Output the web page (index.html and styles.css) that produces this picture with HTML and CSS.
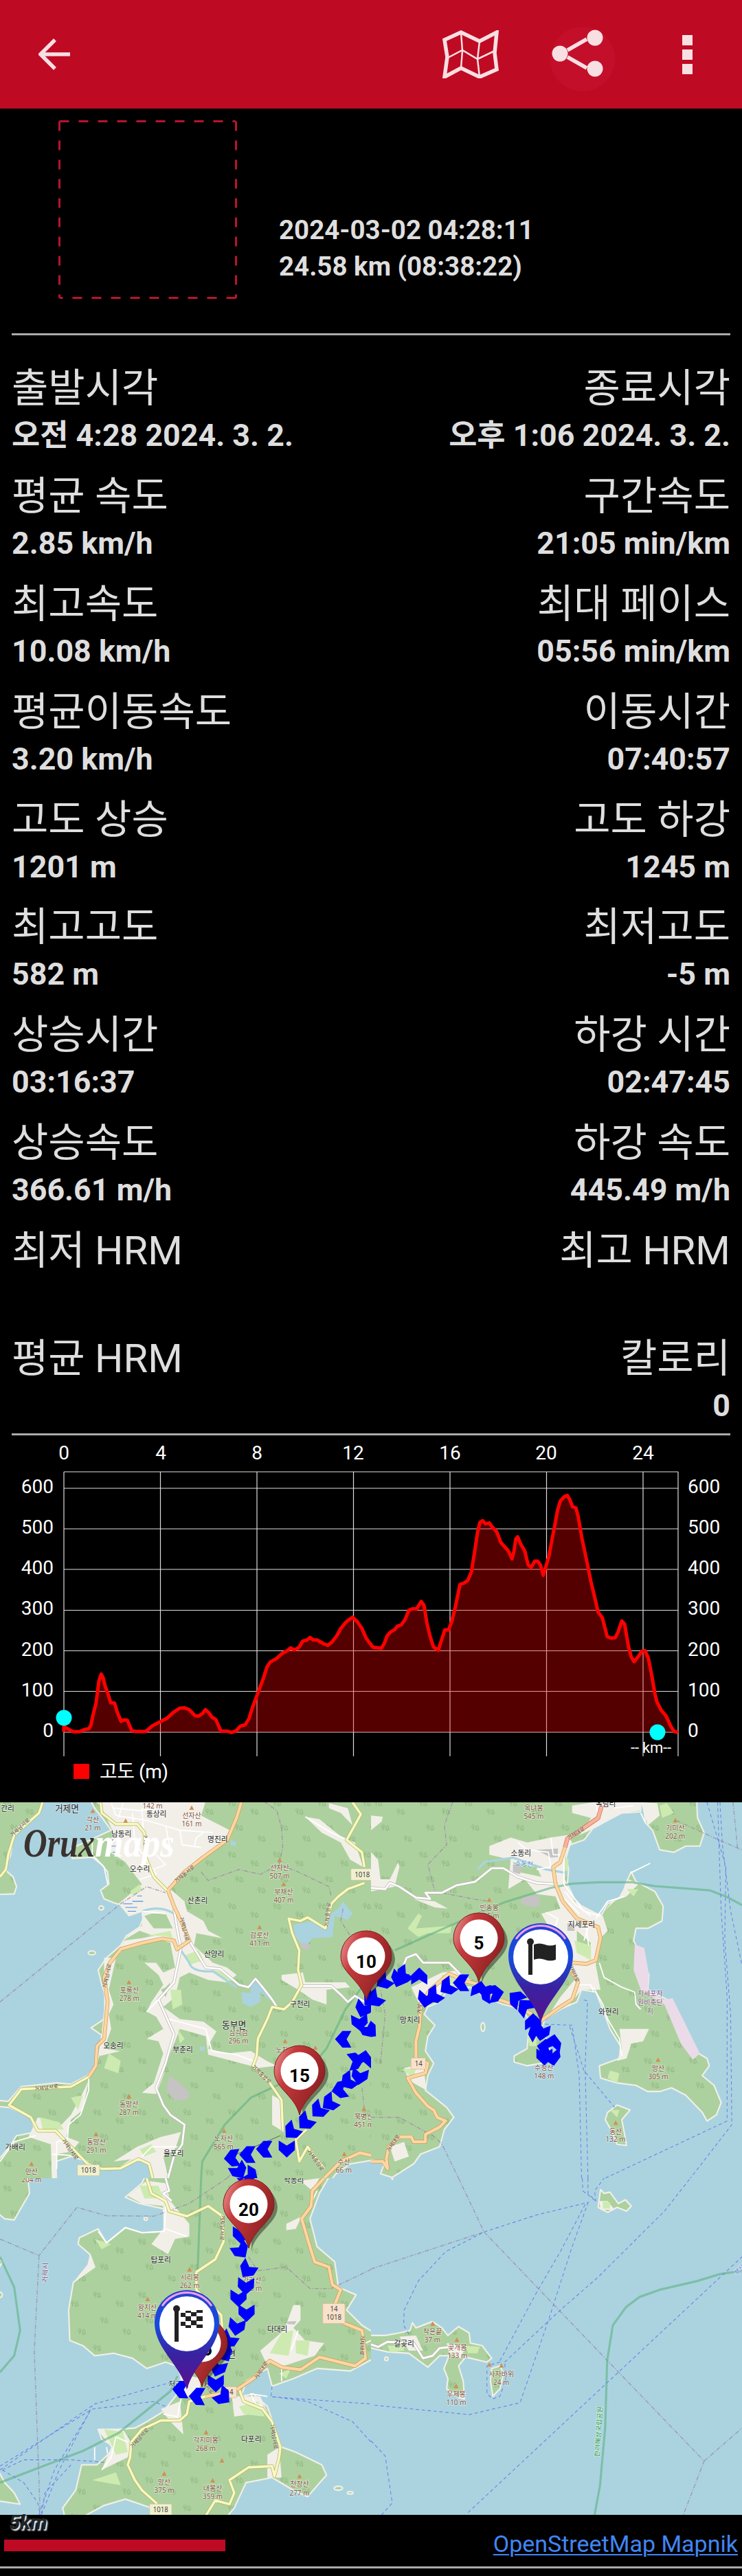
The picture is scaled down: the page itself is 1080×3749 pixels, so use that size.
FILE: index.html
```html
<!DOCTYPE html>
<html lang="ko">
<head>
<meta charset="UTF-8">
<meta name="viewport" content="width=device-width, initial-scale=1.0">
<title>OruxMaps</title>
<link rel="stylesheet" href="styles.css">
</head>
<body>
<header class="toolbar">
  <svg class="icon-back" width="46" height="46" viewBox="0 0 46 46"><path d="M46 23H4M24 2L3 23l21 21"/></svg>
  <div class="actions">
    <svg class="icon-map" width="82" height="70" viewBox="0 0 82 70">
      <path class="thick" d="M3 14L27 3l27 13L79 3l-3 30 3 24-25 11-27-13L3 68l4-29z"/>
      <path class="thin" d="M27 3l2 27-2 25M54 16l-3 26 3 26M6 41l23-12 22 13 25-12"/>
    </svg>
    <svg class="icon-share" width="94" height="94" viewBox="0 0 94 94">
      <circle class="ripple" cx="47" cy="47" r="47"/>
      <path d="M25 34L53 18M25 44l28 16"/>
      <circle cx="14" cy="39" r="11.5"/><circle cx="65" cy="16" r="11.5"/><circle cx="65" cy="61" r="11.5"/>
    </svg>
    <div class="menu"><i></i><i></i><i></i></div>
  </div>
</header>

<section class="summary">
  <svg class="photo" width="260" height="260"><path d="M1.500 1.500H258M258.500 1.500V258.500M1.500 1.500V258.500M258.500 258.500H1.500"/></svg>
  <div class="summary-text">2024-03-02 04:28:11<br>24.58 km (08:38:22)</div>
</section>

<section class="stats">
  <div class="row"><div><p>출발시각</p><b>오전 4:28 2024. 3. 2.</b></div><div><p>종료시각</p><b>오후 1:06 2024. 3. 2.</b></div></div>
  <div class="row"><div><p>평균 속도</p><b>2.85 km/h</b></div><div><p>구간속도</p><b>21:05 min/km</b></div></div>
  <div class="row"><div><p>최고속도</p><b>10.08 km/h</b></div><div><p>최대 페이스</p><b>05:56 min/km</b></div></div>
  <div class="row"><div><p>평균이동속도</p><b>3.20 km/h</b></div><div><p>이동시간</p><b>07:40:57</b></div></div>
  <div class="row"><div><p>고도 상승</p><b>1201 m</b></div><div><p>고도 하강</p><b>1245 m</b></div></div>
  <div class="row"><div><p>최고고도</p><b>582 m</b></div><div><p>최저고도</p><b>-5 m</b></div></div>
  <div class="row"><div><p>상승시간</p><b>03:16:37</b></div><div><p>하강 시간</p><b>02:47:45</b></div></div>
  <div class="row"><div><p>상승속도</p><b>366.61 m/h</b></div><div><p>하강 속도</p><b>445.49 m/h</b></div></div>
  <div class="row"><div><p>최저 HRM</p></div><div><p>최고 HRM</p></div></div>
  <div class="row"><div><p>평균 HRM</p></div><div><p>칼로리</p><b>0</b></div></div>
</section>

<svg class="chart" width="1080" height="534" viewBox="0 2089 1080 534">
  <path class="grid" d="M93 2142H987M93 2166H987M93 2225H987M93 2284H987M93 2343.500H987M93 2402.500H987M93 2461.500H987M93 2521H987"/>
  <path class="grid" d="M93 2142V2556M233.500 2142V2556M374 2142V2556M514.500 2142V2556M655 2142V2556M795.500 2142V2556M936 2142V2556M987 2142V2556"/>
  <!-- altitude profile -->
  <svg x="0" y="1900" width="1080" height="720" viewBox="0 0 1568 1568" preserveAspectRatio="none">
    <path class="profile" d="M135 1352V1335L155 1351 168 1351 178 1344 188 1341 192 1330 197 1295 203 1260 209 1190 214 1168 218 1180 222 1205 228 1230 234 1259 242 1260 248 1290 256 1318 262 1313 269 1314 278 1346 286 1350 308 1350 322 1332 352 1309 366 1290 380 1276 390 1275 400 1281 412 1300 420 1301 428 1293 434 1281 441 1290 448 1305 456 1312 467 1349 480 1349 489 1353 498 1349 508 1333 518 1329 526 1310 534 1272 544 1232 556 1184 564 1146 571 1130 584 1119 596 1103 607 1094 614 1085 622 1092 632 1083 640 1063 648 1061 655 1052 662 1060 670 1060 684 1072 693 1077 702 1066 712 1046 720 1024 732 1002 745 988 755 1002 765 1024 774 1055 788 1083 806 1086 812 1071 818 1047 826 1034 834 1027 840 1016 848 1012 856 995 864 966 872 961 880 962 890 938 896 950 902 1005 908 1044 916 1082 926 1093 932 1065 940 1028 948 1028 955 1000 962 957 972 884 980 880 988 872 996 845 1003 780 1009 720 1014 688 1020 682 1026 692 1034 689 1042 705 1050 718 1058 750 1066 764 1074 777 1082 803 1086 780 1090 740 1094 733 1100 755 1109 778 1116 822 1122 830 1130 810 1136 810 1142 822 1148 855 1153 830 1160 795 1166 745 1172 700 1178 650 1184 620 1192 606 1199 602 1205 618 1210 638 1217 641 1222 670 1230 740 1240 810 1248 870 1256 920 1264 972 1273 990 1283 1049 1291 1054 1300 1053 1306 1035 1314 1000 1320 1010 1328 1080 1334 1114 1340 1129 1348 1114 1356 1096 1363 1094 1370 1117 1377 1170 1384 1230 1388 1255 1397 1282 1408 1302 1418 1335 1425 1350 1433 1353"/>
  </svg>
  <circle class="knob" cx="93" cy="2500" r="11.500"/>
  <circle class="knob" cx="957" cy="2521" r="11.500"/>
  <g class="axis mid">
    <text x="93" y="2124">0</text><text x="234" y="2124">4</text><text x="374" y="2124">8</text><text x="514" y="2124">12</text>
    <text x="655" y="2124">16</text><text x="795" y="2124">20</text><text x="936" y="2124">24</text>
  </g>
  <g class="axis end">
    <text x="78" y="2173">600</text><text x="78" y="2232">500</text><text x="78" y="2291">400</text><text x="78" y="2350">300</text>
    <text x="78" y="2410">200</text><text x="78" y="2469">100</text><text x="78" y="2528">0</text>
  </g>
  <g class="axis">
    <text x="1001" y="2173">600</text><text x="1001" y="2232">500</text><text x="1001" y="2291">400</text><text x="1001" y="2350">300</text>
    <text x="1001" y="2410">200</text><text x="1001" y="2469">100</text><text x="1001" y="2528">0</text>
    <text class="unit" x="918" y="2551" textLength="59">-- km--</text>
    <text x="145" y="2588" textLength="100">고도 (m)</text>
  </g>
  <rect class="legend" x="107" y="2567" width="23" height="22"/>
</svg>

<svg class="map" width="1080" height="1037" viewBox="0 0 1080 1037">
  <defs>
    <g id="tree"><path d="M-9 2a6 7 0 1 1 1 0M-8 -7V12M9 -10l-6 10h3l-5 8h16l-5 -8h3zM9 8v5"/></g>
    <pattern id="trees" width="190" height="210" patternUnits="userSpaceOnUse">
      <rect class="forest" width="190" height="210"/>
      <use href="#tree" x="30" y="40"/><use href="#tree" x="125" y="75"/><use href="#tree" x="60" y="140"/><use href="#tree" x="155" y="185"/>
    </pattern>
    <path id="peak" d="M0 -10L10 8H-10z"/>
    <path id="arrow" d="M0 -34L34 -3V35L0 15 -34 35V-3z"/>
    <linearGradient id="redGrad" x1="0" y1="0" x2="1" y2=".5"><stop offset="0" stop-color="#f0a0a0"/><stop offset=".35" stop-color="#c53a3c"/><stop offset="1" stop-color="#8f2022"/></linearGradient>
    <linearGradient id="blueGrad" x1="0" y1="0" x2="0" y2="1"><stop offset="0" stop-color="#2a3fd0"/><stop offset=".35" stop-color="#164be0"/><stop offset=".65" stop-color="#3a22a0"/><stop offset="1" stop-color="#5a1090"/></linearGradient>
    <g id="redPin">
      <path class="shadow" d="M4 67C10 40 42 28 42 4A37 37 0 0 0 4 -30z"/>
      <path fill="url(#redGrad)" stroke="#7d1c1e" d="M0 64C-7 35 -37 25 -37 0a37 37 0 0 1 74 0C37 25 7 35 0 64z"/>
      <circle r="27.500" fill="#fff"/>
    </g>
    <g id="bluePin">
      <path fill="url(#blueGrad)" d="M0 98C-9 62 -47 38 -47 0a47 47 0 0 1 94 0C47 38 9 62 0 98z"/>
      <path d="M-36 -24A43 43 0 0 1 36 -24" fill="none" stroke="#f0a0f0" stroke-width="3"/>
      <circle cy="2" r="40" fill="#fff"/>
      <circle cx="-15" cy="-20" r="5"/><rect x="-18" y="-18" width="6" height="46"/>
    </g>
    <!-- roads, drawn twice: casing and fill -->
    <path id="wA" d="M735 470L750 560 765 630 735 770 670 840 735 980 700 1100 660 1200 690 1270 720 1310 780 1350 770 1430 735 1480 710 1568M800 600L870 710 930 715 1010 780 1050 790 1080 755 1110 790 1150 840 1170 870M1275 785L1400 785 1440 820 1470 850 1500 825 1540 850"/>
    <path id="oA" d="M1020 36L1000 100 960 190 860 260 780 320 710 395 735 460 770 530 800 600 748 635 735 600 685 592 600 610 510 635 465 690 440 750 455 850 440 1000 410 1030 405 1110 375 1155M1568 1475L1520 1465 1440 1500 1370 1568"/>
    <path id="yA" d="M375 1155L300 1195 200 1200 90 1205 38 1270 130 1320 160 1375 235 1375 290 1430 370 1510 430 1530 510 1528 585 1490 630 1510 645 1568M425 36L430 80 490 125 580 125 610 160 615 260 650 340 705 395M180 36L165 80 60 170 35 250 25 310 0 340M1540 365L1470 390 1430 420 1400 450 1375 550 1300 505 1270 520 1220 510 1235 570 1265 640 1260 720 1275 780 1235 850 1200 880 1150 870 1130 920 1090 1000 1085 1070 1070 1110 1140 1180 1190 1250 1195 1370M1295 1370L1250 1410 1265 1500 1300 1440 1370 1530M1490 36L1525 85 1465 190 1530 240 1540 300"/>
    <path id="wB" d="M0 385L60 390 80 365 120 380 190 425 250 430 230 405 300 405 360 375 440 360 510 305 560 305 620 340 700 365 790 370M130 720L150 670 190 655 220 690 330 690 380 740 420 765"/>
    <path id="sB" d="M975 50L960 100 900 140 830 185 820 220"/>
    <path id="oB" d="M820 220L800 280 770 300 780 370 810 440 870 510 960 545 970 590 950 680 910 695 850 690M845 720L875 770 850 840 800 870 735 915 700 940 680 900 600 860 540 840 460 780 400 765 330 735 250 800 210 860 205 950 190 1010 190 1080 240 1100 230 1140 155 1160 190 1220 240 1275 265 1290 280 1320 315 1335 290 1360 230 1390 230 1420 180 1420 170 1400 120 1400 75 1440 65 1490 70 1530 50 1500 0 1500"/>
    <path id="wC" d="M700 0L715 50 690 60 725 90"/>
    <path id="yC" d="M620 0L640 60 700 90 715 130 790 150 880 110 940 150 945 250 910 320 830 370 830 440 935 540 940 600M870 860L800 880 790 930 760 955 680 955 600 990 555 1040 550 1100 540 1130 570 1190 600 1230 660 1280 690 1340M870 1330L910 1270 970 1285 990 1240 970 1190 1050 1140 1150 1135 1160 1175 1180 1100 1185 1060 1150 960 1110 910 1030 880 1010 830 1030 810"/>
    <path id="oC" d="M1370 0L1320 50 1315 110 1275 160 1300 240 1330 330 1390 350 1405 420 1440 440 1410 510 1450 570 1530 600 1545 710 1500 740 1350 705 1270 755 1190 745 1140 720 1070 790 990 840 870 860"/>
    <path id="wD" d="M0 655L30 665 70 645 180 650 220 710 260 700 290 670 340 665"/>
  </defs>
  <rect class="sea" width="1080" height="1037"/>

  <!-- north west -->
  <svg x="0" y="-13" width="540" height="560" viewBox="0 0 1568 1568" preserveAspectRatio="none">
    <g class="land" fill="url(#trees)">
      <path d="M365 0L400 60 440 110 470 150 380 190 300 225 305 265 390 260 430 290 455 320 460 370 425 395 440 430 480 445 510 455 545 498 600 480 605 510 590 545 535 580 510 620 450 670 415 720 430 780 455 850 440 920 385 955 430 985 425 1030 410 1100 370 1150 300 1185 240 1180 90 1195 35 1255 -20 1250V1275L40 1280 130 1320 150 1380 70 1395 40 1440 -20 1510V1600H240L235 1500 300 1480 370 1500 360 1530 500 1530 560 1490 640 1500 650 1600H1380L1420 1550 1480 1510 1600 1490V0z"/>
      <path d="M-20 0H190L165 80 60 150 45 250 20 310 55 340 70 380 60 410 -20 412z"/>
      <ellipse cx="428" cy="467" rx="10" ry="8"/><ellipse cx="388" cy="650" rx="15" ry="8"/>
    </g>
    <g class="cream">
      <path d="M375 0H880L850 90 970 150 930 220 800 310 720 390 780 440 790 480 860 520 880 560 940 590 830 570 820 620 900 690 960 710 1000 740 960 770 880 760 800 730 760 750 740 830 690 870 760 920 860 930 915 970 890 1010 880 1040 960 1060 1060 1050 1160 1110 1060 1110 880 1065 870 990 760 960 740 1010 710 1080 690 1150 660 1225 600 1220 650 1180 690 1060 670 1010 620 1000 690 960 660 910 620 890 640 850 690 780 670 740 610 690 660 690 690 730 740 710 720 610 660 590 560 620 500 640 540 580 600 540 600 480 545 498 500 450 600 370 560 320 530 280 450 230 480 160 430 60z"/>
      <path d="M480 1500L580 1440 680 1400 765 1380 740 1450 690 1480 720 1600H650L630 1500 560 1490zM375 1170L350 1290 300 1330 280 1400 335 1420 300 1460 240 1470V1600H220L215 1430 120 1400 160 1320 260 1350 300 1310 350 1220z"/>
      <path d="M1190 740L1280 730 1290 770 1460 770 1480 790 1380 800 1380 860 1320 840 1260 800 1190 760zM1290 95L1350 105 1440 175 1500 200 1535 300 1480 270 1440 200 1360 160zM1390 40L1470 60 1490 130 1440 80 1390 60zM1060 1060L1170 1110 1080 1120zM1150 1230L1190 1250 1200 1380 1150 1350zM440 670L490 670 460 800 480 860 460 900 470 960 440 1040 510 1050 420 1070 440 880z"/>
    </g>
    <!-- woods between the fields -->
    <path class="forest" d="M390 190L440 210 400 240 340 230zM700 490L730 550 650 550 610 500 640 490zM780 900L870 900 870 920 800 920zM520 600L590 560 650 580 600 590zM300 1340L340 1390 310 1390zM680 800L700 790 720 770 700 830z"/>
    <g class="scrub"><path d="M460 1060L510 1090 500 1140 440 1120zM720 800L765 800 770 860 730 880zM170 1320L250 1340 270 1370 180 1370zM590 1450L640 1430 660 1460 610 1480zM750 960L780 1000 760 1020zM300 1240L350 1230 330 1290zM550 400L590 370 600 390 565 420zM900 720L960 730 1000 770 930 750zM620 580L720 560 730 590 690 580zM780 660L840 640 860 680 800 700z"/></g>
    <path class="water" d="M1240 535L1320 520 1370 550 1400 490 1430 470 1450 440 1490 490 1470 515 1415 500 1405 585 1320 590 1300 615 1270 610 1245 580zM1020 810L1060 815 1060 775 1090 765 1150 850 1100 810 1100 850 1060 870 1025 855zM975 190L1000 200 995 215 975 210zM845 1030L868 1035 860 1052 845 1048z"/>
    <path class="river" d="M600 480Q680 455 735 490Q750 560 765 640L800 690Q810 730 900 725L1000 790"/>
    <path class="quarry" d="M715 1150L760 1180 800 1220 795 1245 740 1252 705 1215zM1270 610L1312 615 1300 640 1270 630z"/>
    <path class="marsh" d="M470 190h20M465 215h25M475 240h20M520 450h40M530 465h50M560 440h45M540 480h35M580 418h20"/>
    <path class="border" d="M0 850L510 450 620 380 700 405M850 320L880 355 1010 310 1100 330 1180 290 1260 320 1390 380 1400 420M1180 290L1195 220 1190 140 1170 70 1120 36M1450 470L1440 520 1480 580M960 1568L1000 1530M1530 1200L1540 1290"/>
    <path class="park" d="M850 1568L855 1500 950 1350 1060 1240 1160 1195 1300 1130 1380 1040 1460 880 1568 740"/>
    <use href="#wA" class="case white"/><use href="#wA" class="white"/>
    <path class="lane" d="M715 920L870 960 895 1050 1000 1065 1070 1090M375 1160V1210L340 1310 290 1350 285 1410 240 1420V1530M0 1500L60 1420 150 1395M470 40L490 90 620 110 760 150 900 160M520 40L500 100M600 60L610 220M700 130L720 230M760 150L770 210 850 220M560 80L570 200 660 330 590 350M480 60L590 70 680 60M660 250L700 290 650 310M820 220L830 180 860 160M600 480L700 490M670 840L620 890M390 200L390 250 440 300 455 370M600 1480L640 1440 750 1440M1290 95L1400 160 1470 190 1520 230M220 1470L300 1475"/>
    <use href="#oA" class="case orange"/><use href="#oA" class="orange"/>
    <use href="#yA" class="case yellow"/><use href="#yA" class="yellow"/>
    <g class="peaks">
      <use href="#peak" x="392" y="72"/><use href="#peak" x="531" y="112"/><use href="#peak" x="810" y="59"/><use href="#peak" x="1182" y="272"/><use href="#peak" x="1199" y="370"/><use href="#peak" x="1097" y="546"/><use href="#peak" x="545" y="770"/><use href="#peak" x="545" y="1235"/><use href="#peak" x="406" y="1389"/><use href="#peak" x="133" y="1510"/><use href="#peak" x="947" y="1375"/><use href="#peak" x="1205" y="1010"/><use href="#peak" x="1333" y="1037"/><use href="#peak" x="1538" y="1286"/><use href="#peak" x="1455" y="1470"/>
      <text x="392" y="117">각산<tspan x="392" dy="33">21 m</tspan></text>
      <text x="645" y="63">142 m</text>
      <text x="810" y="101">선자산<tspan x="810" dy="34">161 m</tspan></text>
      <text x="1182" y="315">선자산<tspan x="1182" dy="33">507 m</tspan></text>
      <text x="1199" y="413">부채산<tspan x="1199" dy="33">407 m</tspan></text>
      <text x="1097" y="588">감로산<tspan x="1097" dy="33">411 m</tspan></text>
      <text x="547" y="813">포록산<tspan x="547" dy="33">278 m</tspan></text>
      <text x="1008" y="986">삼각점<tspan x="1008" dy="33">296 m</tspan></text>
      <text x="545" y="1277">동망산<tspan x="545" dy="33">287 m</tspan></text>
      <text x="407" y="1432">동망산<tspan x="407" dy="33">291 m</tspan></text>
      <text x="133" y="1551">안산</text>
      <text x="945" y="1418">노자산<tspan x="945" dy="33">565 m</tspan></text>
      <text x="1205" y="1055">노자산</text>
      <text x="1538" y="1328">북병산<tspan x="1538" dy="33">451 m</tspan></text>
      <text x="1453" y="1513">수산<tspan x="1453" dy="33">66 m</tspan></text>
    </g>
    <g class="places">
      <text x="32" y="73">간리</text><text class="big" x="283" y="75">거제면</text><text x="661" y="95">동상리</text><text x="513" y="176">남동리</text><text x="920" y="199">명진리</text><text x="591" y="320">오수리</text><text x="835" y="448">산촌리</text><text x="905" y="667">산양리</text><text x="1268" y="872">구천리</text><text class="big" x="989" y="957">동부면</text><text x="773" y="1055">부춘리</text><text x="479" y="1040">오송리</text><text x="64" y="1454">가배리</text><text x="734" y="1478">율포리</text>
    </g>
    <g class="streets">
      <text transform="translate(90 145) rotate(-42)">거제남서로</text><text transform="translate(785 335) rotate(-38)">거제동서로</text><text transform="translate(772 555) rotate(75)">거제남서로</text><text transform="translate(460 745) rotate(-78)">거제남서로</text><text transform="translate(197 1207) rotate(-8)">거제남서로</text><text transform="translate(290 1455) rotate(54)">거제남서로</text><text transform="translate(1100 1150) rotate(43)">거제중앙로</text><text transform="translate(1393 495) rotate(-84)">거제중앙로</text><text transform="translate(1328 1500) rotate(54)">거제중앙로</text><text transform="translate(607 190) rotate(86)">거제</text>
    </g>
    <g class="shield"><rect x="327" y="1513" width="94" height="45" rx="5"/><text x="374" y="1546">1018</text><rect x="1483" y="307" width="94" height="47" rx="5"/><text x="1531" y="342">1018</text></g>
    <path class="cable" d="M1000 1470L1075 1440 1148 1410 1184 1395"/>
    <g class="route">
      <use href="#arrow" transform="translate(1565 840) rotate(225)"/><use href="#arrow" transform="translate(1535 880) rotate(200)"/><use href="#arrow" transform="translate(1520 935) rotate(175)"/><use href="#arrow" transform="translate(1560 965) rotate(150)"/><use href="#arrow" transform="translate(1450 1002) rotate(270)"/><use href="#arrow" transform="translate(1540 1080) rotate(10)"/><use href="#arrow" transform="translate(1505 1090) rotate(80)"/><use href="#arrow" transform="translate(1520 1155) rotate(190)"/><use href="#arrow" transform="translate(1470 1175) rotate(235)"/><use href="#arrow" transform="translate(1435 1208) rotate(260)"/><use href="#arrow" transform="translate(1392 1262) rotate(235)"/><use href="#arrow" transform="translate(1345 1292) rotate(225)"/><use href="#arrow" transform="translate(1290 1340) rotate(225)"/><use href="#arrow" transform="translate(1232 1378) rotate(225)"/><use href="#arrow" transform="translate(1212 1450) rotate(180)"/><use href="#arrow" transform="translate(1116 1450) rotate(270)"/><use href="#arrow" transform="translate(1045 1472) rotate(270)"/><use href="#arrow" transform="translate(980 1486) rotate(265)"/><use href="#arrow" transform="translate(1010 1540) rotate(150)"/><use href="#arrow" transform="translate(1060 1560) rotate(120)"/>
    </g>
  </svg>

  <!-- north east -->
  <svg x="540" y="-13" width="540" height="560" viewBox="0 0 1568 1568" preserveAspectRatio="none">
    <g class="land" fill="url(#trees)">
      <path d="M-20 0H1140V75L1060 80 940 140 900 190 840 210 825 260 835 310 830 370 860 430 910 480 975 495 1000 450 1060 420 1080 360 1100 320 1120 360 1200 400 1235 460 1230 520 1170 550 1120 550 1110 600 1130 640 1175 740 1170 800 1270 850 1330 960 1385 1060 1420 1080 1430 1110 1400 1150 1450 1190 1480 1260 1460 1310 1420 1335 1400 1300 1330 1230 1270 1200 1220 1215 1170 1215 1120 1190 1040 1180 970 1160 965 1110 1050 1080 1055 1030 1010 960 980 880 950 810 890 800 870 850 800 880 735 920 720 960 740 1000 760 1060 720 1100 660 1110 605 1095 605 1070 660 1040 665 980 690 960 640 880 560 860 480 830 420 790 330 790 290 850 240 870 225 900 270 945 240 990 230 1050 265 1100 240 1150 230 1210 320 1280 350 1320 310 1370 290 1440 210 1470 180 1510 90 1565 40 1550 60 1500 -20 1490z"/>
      <path d="M1145 0L1160 120 1190 150 1220 230 1280 240 1330 215 1390 215 1408 160 1380 100 1375 0z"/>
      <path d="M1040 1270L1095 1290 1060 1330 1070 1380 1080 1435 1040 1430 1020 1380 990 1330 1000 1300z"/>
      <ellipse cx="473" cy="952" rx="8" ry="18"/>
    </g>
    <g class="cream">
      <path d="M500 215L590 180 660 200 760 180 830 170 850 200 820 260 820 350 860 440 980 500 1000 560 960 600 950 700 970 800 890 800 840 860 740 920 800 830 860 760 850 700 840 600 760 560 720 490 800 470 780 420 700 410 650 350 580 390 590 270 500 250zM850 50L940 36 1140 0V70L1060 80 950 140 880 170 930 100 850 80zM1140 36L1210 40 1220 90 1170 130zM985 480L1050 420 1090 350 1130 370 1080 420 1020 440zM1050 960L1175 960 1150 1010 1100 1020 1080 1080 1040 1090 1060 1040z"/>
      <path d="M170 790L300 730 370 720 380 770 330 790 240 870 200 850zM140 1120L220 1100 235 1210 160 1170zM0 90L50 95 45 115 0 150zM0 240L30 270 40 350 80 350 115 280 120 300 100 380 0 400zM180 430L270 440 325 470 270 465zM80 1440L140 1420 160 1480 100 1500z"/>
    </g>
    <path class="forest" d="M600 280L700 300 720 340 620 320zM870 560L930 610 920 640 870 610z"/>
    <g class="scrub"><path d="M200 490L215 500 190 550 340 540 335 570 240 570 200 585 155 550zM1220 50L1250 40 1280 80 1230 100zM860 600L930 620 930 680 870 650zM1010 1130L1050 1140 1040 1180 1000 1160zM1010 1290L1050 1290 1040 1320zM130 1125L190 1120 180 1160zM300 740L360 740 350 780 290 780zM820 260L835 270 830 320 820 310zM660 990L700 990 700 1030 670 1030zM1080 390L1130 390 1110 420z"/></g>
    <path class="quarry" d="M640 420L710 415 712 460 680 463 635 450zM700 230L790 225 790 260 760 262zM600 290L640 290 630 330 600 320zM830 530L860 530 860 560 830 560z"/>
    <path class="pink" d="M1115 615L1155 630 1175 740 1170 800 1235 840 1275 835 1390 1060 1360 1085 1310 1020 1240 860 1140 800 1110 720z"/>
    <path class="river" d="M830 325L740 310 600 262 480 280 450 310"/>
    <path class="border" d="M345 36L310 130 320 210 240 290 270 400 430 430 500 440M1290 110L1470 190 1568 230M1530 36L1550 230M0 1320L120 1320 270 1400 300 1430 370 1568M40 1100L60 900 40 800"/>
    <path class="park" d="M100 640L320 545 560 445 760 385 850 368 960 362 1100 362 1200 378 1430 395 1500 420 1568 455"/>
    <path class="ferry" d="M890 1568L880 1150 850 945 720 940M917 1568L905 1120 915 845 890 840M1465 36L1480 480 1505 830 1505 1335 990 1568M1420 36L1500 300 1495 600 1520 900 1525 1350 1350 1568M1475 36L1485 210 1520 480 1568 700M840 950L900 1130 1030 1280"/>
    <use href="#wB" class="case white"/><use href="#wB" class="white"/>
    <path class="lane" d="M965 690L985 750 1060 790 1115 810 1120 860 1140 880M940 790L980 860 1000 920 1050 1000 1060 1070M815 250V370L900 480 970 500M620 200L660 230 750 240 760 300 700 310M760 180L770 250 820 250M820 400L860 450 930 500M820 430L880 490M800 440L840 480 920 540 900 600M910 550L920 620M950 510L1000 440 1070 420M1095 325L1180 285M740 485L790 510 780 540M1140 80L1160 120M870 780L930 780 940 810M950 40L960 90M1030 60L1110 50"/>
    <use href="#sB" class="case salmon"/><use href="#sB" class="salmon"/>
    <use href="#oB" class="case orange"/><use href="#oB" class="orange"/>
    <g class="peaks">
      <use href="#peak" x="500" y="434"/><use href="#peak" x="1286" y="110"/><use href="#peak" x="1213" y="1086"/><use href="#peak" x="1034" y="1343"/>
      <text x="688" y="71">옥녀봉<tspan x="688" dy="33">545 m</tspan></text>
      <text x="500" y="477">빈송봉<tspan x="500" dy="33">395 m</tspan></text>
      <text x="1286" y="152">기미산<tspan x="1286" dy="33">202 m</tspan></text>
      <text x="731" y="1129">수정산<tspan x="731" dy="33">148 m</tspan></text>
      <text x="1214" y="1131">망산<tspan x="1214" dy="33">305 m</tspan></text>
      <text x="1034" y="1388">동산<tspan x="1034" dy="33">132 m</tspan></text>
      <text class="zone" x="1180" y="825">지세포자<tspan x="1180" dy="37">원비축단</tspan><tspan x="1180" dy="37">지</tspan></text>
    </g>
    <g class="places"><text x="992" y="53">옥림리</text><text x="634" y="256">소동리</text><text x="890" y="545">지세포리</text><text x="165" y="935">망치리</text><text x="1004" y="902">와현리</text><text class="stream" transform="translate(645 297) rotate(6)">소동천</text></g>
    <g class="streets"><text transform="translate(870 170) rotate(-30)">거제대로</text><text transform="translate(850 735) rotate(65)">거제대로</text><text transform="translate(213 880) rotate(-85)">거제</text><text transform="translate(100 1430) rotate(-55)">거제대로</text></g>
    <g class="shield trunk"><rect x="169" y="1078" width="62" height="46" rx="5"/><text x="201" y="1112">14</text></g>
    <g class="route">
      <use href="#arrow" transform="translate(733 1075) rotate(180)"/><use href="#arrow" transform="translate(767 1077) rotate(170)"/><use href="#arrow" transform="translate(735 1035) rotate(280)"/><use href="#arrow" transform="translate(770 1015) rotate(10)"/><use href="#arrow" transform="translate(720 975) rotate(190)"/><use href="#arrow" transform="translate(695 968) rotate(330)"/><use href="#arrow" transform="translate(685 930) rotate(0)"/><use href="#arrow" transform="translate(650 868) rotate(320)"/><use href="#arrow" transform="translate(612 835) rotate(310)"/><use href="#arrow" transform="translate(528 815) rotate(80)"/><use href="#arrow" transform="translate(490 812) rotate(300)"/><use href="#arrow" transform="translate(460 798) rotate(10)"/><use href="#arrow" transform="translate(380 772) rotate(270)"/><use href="#arrow" transform="translate(322 790) rotate(235)"/><use href="#arrow" transform="translate(265 825) rotate(235)"/><use href="#arrow" transform="translate(232 840) rotate(190)"/><use href="#arrow" transform="translate(204 744) rotate(0)"/><use href="#arrow" transform="translate(135 742) rotate(235)"/><use href="#arrow" transform="translate(118 758) rotate(200)"/><use href="#arrow" transform="translate(52 766) rotate(235)"/><use href="#arrow" transform="translate(15 840) rotate(230)"/><use href="#arrow" transform="translate(-5 968) rotate(130)"/>
    </g>
  </svg>

  <!-- south west -->
  <svg x="0" y="547" width="540" height="579" viewBox="0 0 1568 1568" preserveAspectRatio="none">
    <g class="land" fill="url(#trees)">
      <path d="M-20 -20H115L125 60 60 165 20 160 -20 130z"/>
      <path d="M620 -20L600 20 530 75 590 100 690 120 700 180 690 210 600 215 530 195 450 255 415 200 335 235 330 260 380 300 400 350 310 410 290 520 295 640 350 660 400 700 480 690 560 710 620 750 700 725 745 740 770 790 750 850 690 920 620 960 570 985 500 990 415 990 430 1030 490 1060 410 1130 345 1130 320 1230 265 1300 290 1400 340 1340 440 1290 530 1265 640 1300 660 1400 900 1400 990 1300 1040 1200 1150 1180 1240 1230 1300 1255 1380 1170 1360 1130 1250 1080 1190 1060 1160 980 1130 900 1070 850 1020 860 1040 800 1130 750 1150 820 1240 790 1340 750 1480 760 1600 700V620L1530 580 1465 520 1505 460 1430 430 1415 330 1340 270 1310 160 1350 60 1400 -20z"/>
      <path d="M-20 1130L20 1200 60 1240 85 1285 -20 1270zM-20 310L10 330 -20 380z"/>
      <ellipse cx="1430" cy="1222" rx="18" ry="8"/><ellipse cx="1480" cy="1240" rx="12" ry="5"/><ellipse cx="616" cy="160" rx="7" ry="6"/><ellipse cx="0" cy="460" rx="10" ry="10"/>
    </g>
    <g class="cream">
      <path d="M620 10L700 20 720 90 800 180 800 230 740 240 710 300 640 260 690 200 690 110 600 100 540 70zM1240 500L1270 500 1270 560 1240 590 1290 640 1370 650 1330 700 1200 740 1120 720 1100 680 1200 600zM410 990L520 990 560 1050 540 1100 430 1150 470 1060zM680 910L760 880 775 1010 720 960zM980 860L1100 860 1130 920 1060 930 990 940zM1275 150L1250 200 1210 205 1210 180zM1130 1090L1180 1060 1190 1180 1130 1180zM380 300L400 350 310 410 370 340zM1270 10L1350 0 1320 50zM760 770L850 790 840 860 770 860z"/>
    </g>
    <g class="scrub"><path d="M390 1190L490 1160 510 1210 440 1200zM590 30L670 30 690 80 610 80zM1190 610L1240 600 1220 700 1140 690zM1250 640L1310 640 1300 700 1250 690zM440 990L520 1000 540 1080 490 1090zM400 240L470 260 430 280zM1010 900L1090 880 1120 940 1030 930zM1180 770L1230 750 1210 790z"/></g>
    <path class="quarry" d="M1213 565L1253 563 1245 577 1215 575z"/><path class="pink" d="M1095 905L1115 890 1130 920z"/>
    <path class="border" d="M0 240L165 305 325 115 450 148 650 150 800 100 960 0M165 305L145 680 170 1327M1050 310L1090 365 1210 350 1310 435 1400 435 1568 360"/>
    <path class="park" d="M0 310L60 430 85 600 60 700 0 765M0 1200L350 1075 500 1005 720 840 750 780M850 0L835 370"/>
    <path class="ferry" d="M0 1150L400 890 740 800M0 1135L390 910 650 880 700 900M10 1150L100 1110 300 1110 440 1120M175 1327L250 1150 390 900M165 1327L230 1150 380 920M10 1150L100 1200 160 1280 170 1327M300 1130L190 1240 175 1327M1150 820L1145 860 1300 880 1490 960 1568 1040M1150 862L1568 890"/>
    <path class="lane" d="M700 110L695 210 600 215 530 195 450 255 415 210M765 870L750 940 690 930M490 1020L470 1100 430 1150M490 1020L540 1040M700 200L790 230M1130 860L1060 850 1080 890 1110 900M1190 750L1190 800M400 1060V1110M1230 680L1260 600M1340 50L1310 110M1545 650L1568 640M450 1060L455 1085"/>
    <use href="#wC" class="case white"/><use href="#wC" class="white"/>
    <use href="#yC" class="case yellow"/><use href="#yC" class="yellow"/>
    <use href="#oC" class="case orange"/><use href="#oC" class="orange"/>
    <g class="peaks">
      <use href="#peak" x="801" y="360"/><use href="#peak" x="624" y="477"/><use href="#peak" x="871" y="1002"/><use href="#peak" x="938" y="1113"/><use href="#peak" x="694" y="1165"/><use href="#peak" x="899" y="1192"/><use href="#peak" x="1266" y="1175"/>
      <text x="133" y="15">204 m</text>
      <text x="802" y="401">시리봉<tspan x="802" dy="33">262 m</tspan></text>
      <text x="623" y="519">왕지산<tspan x="623" dy="33">414 m</tspan></text>
      <text x="1065" y="411">가라산<tspan x="1065" dy="33">580 m</tspan></text>
      <text x="870" y="1042">각지미봉<tspan x="870" dy="33">268 m</tspan></text>
      <text x="694" y="1207">망산<tspan x="694" dy="33">375 m</tspan></text>
      <text x="899" y="1233">내봉산<tspan x="899" dy="33">359 m</tspan></text>
      <text x="1266" y="1217">천장산<tspan x="1266" dy="33">277 m</tspan></text>
      <text class="zone" transform="translate(201 373) rotate(-88)">거제시</text>
    </g>
    <g class="places"><text x="1242" y="20">학동리</text><text x="680" y="332">탑포리</text><text x="1172" y="606">다대리</text><text x="1062" y="1040">다포리</text><text x="755" y="823">저구리</text><text class="big" x="945" y="708">남부면</text></g>
    <g class="streets"><text transform="translate(932 195) rotate(92)">거제남서로</text><text transform="translate(595 1030) rotate(-46)">거제남서로</text><text transform="translate(1110 762) rotate(-55)">거제대로</text><text transform="translate(1522 658) rotate(92)">거제대로</text><text transform="translate(1150 1020) rotate(80)">거제남서로</text><text transform="translate(873 830) rotate(50)">남서로</text></g>
    <g class="shield"><rect x="632" y="1284" width="94" height="45" rx="5"/><text x="679" y="1316">1018</text></g>
    <g class="shield trunk"><rect x="1364" y="494" width="94" height="79" rx="5"/><text x="1411" y="526">14<tspan x="1411" dy="32">1018</tspan></text><rect x="938" y="822" width="62" height="44" rx="5"/><text x="970" y="853">14</text></g>
    <g class="route">
      <use href="#arrow" transform="translate(1060 -20) rotate(90)"/><use href="#arrow" transform="translate(1015 -20) rotate(180)"/><use href="#arrow" transform="translate(1018 225) rotate(180)"/><use href="#arrow" transform="translate(1018 285) rotate(145)"/><use href="#arrow" transform="translate(1045 362) rotate(215)"/><use href="#arrow" transform="translate(1039 427) rotate(183)"/><use href="#arrow" transform="translate(1008 474) rotate(180)"/><use href="#arrow" transform="translate(1042 533) rotate(180)"/><use href="#arrow" transform="translate(1000 588) rotate(190)"/><use href="#arrow" transform="translate(965 640) rotate(215)"/><use href="#arrow" transform="translate(950 692) rotate(150)"/><use href="#arrow" transform="translate(920 750) rotate(200)"/><use href="#arrow" transform="translate(912 810) rotate(180)"/><use href="#arrow" transform="translate(943 862) rotate(130)"/><use href="#arrow" transform="translate(832 860) rotate(272)"/><use href="#arrow" transform="translate(762 833) rotate(272)"/>
    </g>
  </svg>

  <!-- south east -->
  <svg x="540" y="547" width="540" height="579" viewBox="0 0 1568 1568" preserveAspectRatio="none">
    <g class="land" fill="url(#trees)">
      <path d="M-20 620L60 620 120 610 165 600 175 570 190 590 260 565 300 590 325 620 370 585 415 610 420 650 470 660 510 710 490 725 400 705 370 740 390 800 395 870 370 865 320 830 325 790 308 750 330 700 290 700 240 745 160 690 70 685 -20 665z"/>
      <path d="M545 740L560 770 545 830 515 860 505 800 510 750zM970 45L985 60 1010 55 1045 100 1075 85 1100 110 1080 130 1040 115 1000 135 960 115zM75 -20L105 -20 90 5z"/>
      <circle cx="65" cy="712" r="7"/>
    </g>
    <g class="cream"><path d="M120 625L190 620 220 680 160 680zM320 650L400 660 380 710 330 690zM380 840L400 845 395 875 370 865zM965 90L1000 90 1030 125 970 125z"/></g>
    <g class="scrub"><path d="M70 660L140 660 140 680 80 685zM400 660L460 665 450 690 410 690zM980 90L1010 95 1010 120 980 120z"/></g>
    <path class="border" d="M370 0L478 212 995 715 1408 1115 1320 1327M0 358L478 212M1408 1115L1568 985"/>
    <path class="park" d="M945 1327L968 1210 990 980 998 720 1022 580 1078 508 1135 468 1220 440 1380 405 1475 378 1568 365"/>
    <path class="ferry" d="M160 615L138 580 140 520 200 405 315 290 478 212 700 145 920 95M545 720L700 450 800 290 910 95M15 895L415 932 630 885 750 560 850 270 920 90M565 725L800 520 960 390 1240 130 1350 0M410 1318L1568 310M545 725L490 740V850L515 870 545 860 570 790 565 725M0 1035L60 1095 90 1280 45 1327M893 0L895 50 950 90M917 0V60L950 90 945 50 985 0"/>
    <use href="#wD" class="case white"/><use href="#wD" class="white"/>
    <g class="peaks">
      <use href="#peak" x="261" y="574"/><use href="#peak" x="363" y="637"/><use href="#peak" x="360" y="820"/><use href="#peak" x="500" y="735"/><use href="#peak" x="551" y="739"/>
      <text x="260" y="615">작은끝<tspan x="260" dy="33">37 m</tspan></text>
      <text x="365" y="677">곶개봉<tspan x="365" dy="33">133 m</tspan></text>
      <text x="360" y="860">우제봉<tspan x="360" dy="33">110 m</tspan></text>
      <text x="551" y="782">사자바위<tspan x="551" dy="33">24 m</tspan></text>
      <text class="parkname" transform="translate(972 1000) rotate(-86)">한려해상국립공원</text>
      <text class="sealane" transform="translate(1562 368) rotate(-40)">부산</text>
    </g>
    <g class="places"><text x="140" y="663">갈곶리</text></g>
  </svg>

  <!-- kilometre markers -->
  <g class="pins">
    <g transform="translate(697 198)"><use href="#redPin"/><text y="16">5</text></g>
    <g transform="translate(533 224)"><use href="#redPin"/><text y="17">10</text></g>
    <g transform="translate(436 391)"><use href="#redPin"/><text y="16">15</text></g>
    <g transform="translate(362 585)"><use href="#redPin"/><text y="17">20</text></g>
    <g transform="translate(294 787)"><use href="#redPin"/><text y="18">25</text></g>
    <g transform="translate(787 223)"><use href="#bluePin"/><path d="M-10 -16q8 -3 16 0t16 0v22q-8 3 -16 0t-16 0z"/></g>
    <g transform="translate(272 757)"><use href="#bluePin"/><path d="M-9 -14h7v6h-7zM-2 -9h8v7h-8zM6 -15h8v6h-8zM14 -9h9v7h-9zM-9 -1h7v6h-7zM6 -3h8v7h-8zM-2 -17h8v3h-8zM14 -18h9v4h-9zM-2 4h8v4h-8zM14 3h9v5h-9z"/></g>
  </g>
  <text class="logo" x="34" y="79" textLength="104" lengthAdjust="spacingAndGlyphs">Orux</text>
  <text class="logo light" x="138" y="79" textLength="116" lengthAdjust="spacingAndGlyphs">maps</text>
</svg>

<footer class="mapbar">
  <div class="scale"><span>5km</span><div class="bar"></div></div>
  <a href="#">OpenStreetMap Mapnik</a>
</footer>
</body>
</html>
```
FILE: styles.css
```css
* {
  box-sizing: border-box;
}
body {
  margin: 0;
  width: 1080px;
  height: 3749px;
  overflow: hidden;
  background: #000;
  color: #dedede;
  font-family: Roboto, "Noto Sans CJK KR", sans-serif;
}
svg {
  display: block;
}
.toolbar {
  height: 158px;
  background: #bf0a24;
  display: flex;
  justify-content: space-between;
  align-items: center;
  padding: 0 72px 0 56px;
}
.icon-back, .icon-map {
  fill: none;
  stroke: #f8dfe2;
  stroke-width: 5.5;
}
.actions {
  display: flex;
  align-items: center;
}
.icon-map {
  margin-right: 75px;
}
.icon-map .thin {
  stroke-width: 2.5;
}
.icon-share {
  margin: 14px 98px 0 0;
  fill: #f8dfe2;
  stroke: none;
}
.icon-share path {
  stroke: #f8dfe2;
  stroke-width: 5.5;
}
.icon-share .ripple {
  fill: #c30f2a;
}
.menu {
  display: flex;
  flex-direction: column;
  gap: 6px;
}
.menu i {
  width: 15px;
  height: 15px;
  background: #f8dfe2;
}

.summary {
  display: flex;
  height: 330px;
  margin: 0 17px;
  padding: 17px 0 0 68px;
  border-bottom: 3px solid #aaa;
}
.photo path {
  fill: none;
  stroke: #b8142e;
  stroke-width: 3;
  stroke-dasharray: 14;
}
.summary-text {
  margin: 133px 0 0 61px;
  font-size: 38.5px;
  font-weight: bold;
  line-height: 53px;
}

.stats {
  margin: 0 17px;
  padding-top: 29px;
  height: 1601px;
  border-bottom: 3px solid #aaa;
}
.row {
  display: flex;
  justify-content: space-between;
  height: 156.9px;
}
.row div:last-child {
  text-align: right;
}
.row p {
  margin: 0;
  font-size: 58px;
  line-height: 97px;
}
.row b {
  display: block;
  font-size: 44.8px;
  line-height: 40px;
}

.grid {
  stroke: #ddd;
  stroke-width: 1.2;
}
.profile {
  fill: rgba(255, 0, 0, 0.33);
  stroke: #f00;
  stroke-width: 5;
  stroke-linejoin: round;
  vector-effect: non-scaling-stroke;
}
.knob {
  fill: #0ff;
}
.legend {
  fill: #f00;
}
.axis {
  fill: #fff;
  font-size: 28px;
}
.mid {
  text-anchor: middle;
}
.end {
  text-anchor: end;
}
.unit {
  font-size: 22px;
}

/* map */
.map {
  font-family: "Noto Sans", "Noto Sans CJK KR", sans-serif;
}
.map path {
  stroke-linejoin: round;
}
.sea, .water {
  fill: #aad3df;
}
.land {
  stroke: #f2efe9;
  stroke-width: 6;
}
.forest {
  fill: #add19e;
  stroke: none;
}
.cream {
  fill: #f2efe9;
}
.scrub {
  fill: #cdebb0;
}
.river {
  fill: none;
  stroke: #aad3df;
  stroke-width: 9;
}
.quarry {
  fill: #c5c3c3;
}
.pink {
  fill: #ebdbe8;
}
.marsh {
  stroke: #4a90d9;
  stroke-width: 3;
}
#tree {
  fill: none;
  stroke: #86b07a;
  stroke-width: 2.2;
}
.border, .park, .ferry, .lane, .white, .orange, .yellow, .salmon, .cable {
  fill: none;
}
.border {
  stroke: #9c86a8;
  stroke-width: 4;
  stroke-dasharray: 18 6 4 6;
  opacity: .75;
}
.park {
  stroke: #5fb184;
  stroke-width: 9;
  opacity: .6;
}
.ferry {
  stroke: #6a80ea;
  stroke-width: 3;
  stroke-dasharray: 14 11;
}
.lane {
  stroke: #fff;
  stroke-width: 5;
}
.white {
  stroke: #fff;
  stroke-width: 8;
}
.orange {
  stroke: #fcd6a4;
  stroke-width: 12;
}
.salmon {
  stroke: #f9b29c;
  stroke-width: 14;
}
.yellow {
  stroke: #f7fabf;
  stroke-width: 10;
}
.case.white {
  stroke: #b9b5b0;
  stroke-width: 12;
}
.case.orange {
  stroke: #cf9a50;
  stroke-width: 16;
}
.case.salmon {
  stroke: #d07050;
  stroke-width: 18;
}
.case.yellow {
  stroke: #b5ae6c;
  stroke-width: 14;
}
.cable {
  stroke: #333;
  stroke-width: 2;
}
.peaks, .places, .streets, .shield {
  text-anchor: middle;
}
.peaks text, .places text, .streets text {
  paint-order: stroke;
  stroke: rgba(255, 255, 255, 0.6);
  stroke-width: 4;
}
.peaks {
  font-size: 29px;
}
.peaks use {
  fill: #d08f55;
}
.peaks text {
  fill: #85543f;
}
.peaks .zone {
  fill: #8a5a86;
}
.peaks .parkname {
  fill: #239a3a;
  font-size: 27px;
}
.peaks .sealane {
  fill: #5a70e0;
  font-size: 26px;
}
.places {
  fill: #222;
  font-size: 31px;
}
.places .big {
  font-size: 37px;
}
.places .stream {
  fill: #4a90d0;
  font-size: 28px;
}
.streets {
  fill: #4d3b20;
  font-size: 22px;
}
.streets text {
  stroke-width: 2;
}
.shield rect {
  fill: #f1f0d0;
  stroke: #c8c38f;
  stroke-width: 2;
}
.shield text {
  fill: #444;
  font-size: 28px;
}
.trunk rect {
  fill: #f8e2cb;
  stroke: #dcb48c;
}
.route {
  fill: #00f;
}
.pins {
  fill: #222;
}
.pins text {
  fill: #000;
  font: bold 26px Roboto, sans-serif;
  text-anchor: middle;
}
.shadow {
  fill: rgba(0, 0, 0, 0.4);
}
.logo {
  font: italic bold 60px "Liberation Serif", serif;
  fill: #3a3230;
}
.logo.light {
  fill: #fff;
}

.mapbar {
  height: 78px;
  display: flex;
  justify-content: space-between;
  padding: 0 6px;
  border-bottom: 3px solid #aaa;
}
.scale span {
  display: block;
  height: 36px;
  padding-left: 7px;
  color: #222;
  font-size: 29px;
  font-style: italic;
  font-weight: bold;
  line-height: 23px;
  text-shadow: 2px 2px 2px #fff;
}
.bar {
  width: 322px;
  height: 17px;
  background: #bf0a24;
}
.mapbar a {
  color: #4285f4;
  font-size: 34px;
  line-height: 84px;
  text-underline-offset: 3px;
  text-decoration-thickness: 2px;
}
```
